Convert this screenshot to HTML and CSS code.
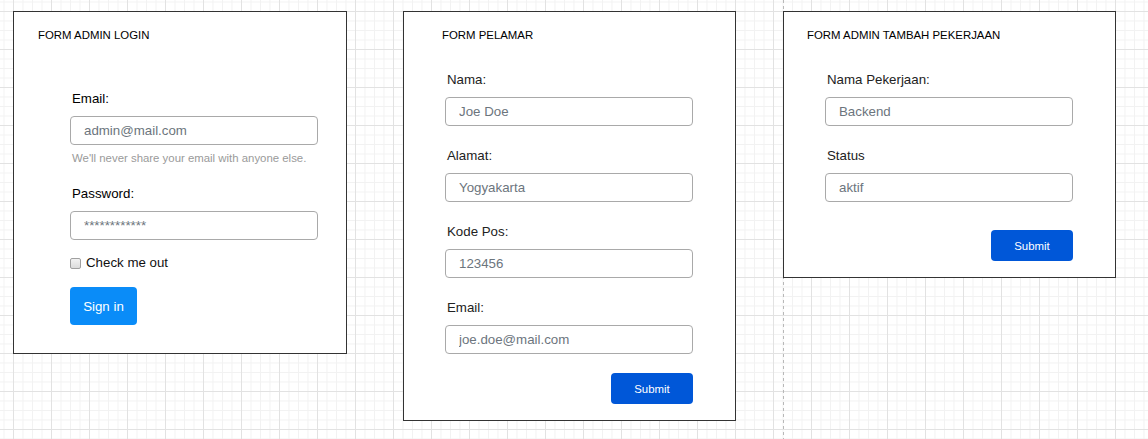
FILE: index.html
```html
<!DOCTYPE html>
<html lang="id">
<head>
<meta charset="utf-8">
<title>Form Mockups</title>
<link rel="stylesheet" href="styles.css">
</head>
<body>
<main class="canvas">
  <section class="card card--login">
    <h2 class="card-title">FORM ADMIN LOGIN</h2>
    <form class="form">
      <div class="field">
        <label class="label">Email:</label>
        <input class="input" type="text" placeholder="admin@mail.com">
        <small class="help">We'll never share your email with anyone else.</small>
      </div>
      <div class="field field--password">
        <label class="label">Password:</label>
        <input class="input" type="text" placeholder="************">
      </div>
      <label class="check">
        <input class="check-box" type="checkbox">
        <span>Check me out</span>
      </label>
      <button class="btn btn--signin" type="button">Sign in</button>
    </form>
  </section>

  <section class="card card--pelamar">
    <h2 class="card-title">FORM PELAMAR</h2>
    <form class="form">
      <div class="field">
        <label class="label">Nama:</label>
        <input class="input" type="text" placeholder="Joe Doe">
      </div>
      <div class="field">
        <label class="label">Alamat:</label>
        <input class="input" type="text" placeholder="Yogyakarta">
      </div>
      <div class="field">
        <label class="label">Kode Pos:</label>
        <input class="input" type="text" placeholder="123456">
      </div>
      <div class="field">
        <label class="label">Email:</label>
        <input class="input" type="text" placeholder="joe.doe@mail.com">
      </div>
      <div class="actions">
        <button class="btn btn--submit" type="button">Submit</button>
      </div>
    </form>
  </section>

  <section class="card card--kerja">
    <h2 class="card-title">FORM ADMIN TAMBAH PEKERJAAN</h2>
    <form class="form">
      <div class="field">
        <label class="label">Nama Pekerjaan:</label>
        <input class="input" type="text" placeholder="Backend">
      </div>
      <div class="field">
        <label class="label">Status</label>
        <input class="input" type="text" placeholder="aktif">
      </div>
      <div class="actions actions--kerja">
        <button class="btn btn--submit" type="button">Submit</button>
      </div>
    </form>
  </section>
</main>
</body>
</html>
```

FILE: styles.css
```css
* {
  box-sizing: border-box;
}

html, body {
  margin: 0;
  padding: 0;
  height: 100%;
}

body {
  font-family: "Liberation Sans", Arial, sans-serif;
  background-color: #ffffff;
  background-image:
    repeating-linear-gradient(to bottom, #b8b8b8 0 3px, transparent 3px 6px),
    linear-gradient(to right, #e2e2e2 1px, transparent 1px),
    linear-gradient(to bottom, #e2e2e2 1px, transparent 1px),
    linear-gradient(to right, #f2f2f2 1px, transparent 1px),
    linear-gradient(to bottom, #f2f2f2 1px, transparent 1px);
  background-size:
    1px 100%,
    38px 38px,
    38px 38px,
    9.5px 9.5px,
    9.5px 9.5px;
  background-position:
    783px 0,
    13px 11px,
    13px 11px,
    13px 11px,
    13px 11px;
  background-repeat:
    no-repeat,
    repeat,
    repeat,
    repeat,
    repeat;
  overflow: hidden;
}

.canvas {
  display: flex;
  align-items: flex-start;
  padding: 11px 0 0 13px;
}

.card {
  background: #ffffff;
  border: 1px solid #333333;
  padding-top: 17px;
  flex: none;
}

.card--login {
  width: 334px;
  height: 343px;
  --title-x: 24px;
  --form-x: 56px;
  --form-top: 49px;
}

.card--pelamar {
  width: 333px;
  height: 410px;
  margin-left: 56px;
  --title-x: 38px;
  --form-x: 41px;
  --form-top: 30px;
}

.card--kerja {
  width: 333px;
  height: 267px;
  margin-left: 47px;
  --title-x: 23px;
  --form-x: 41px;
  --form-top: 30px;
}

.card-title {
  margin: 0;
  padding-left: var(--title-x);
  font-size: 11.4px;
  line-height: 13px;
  font-weight: normal;
  color: #000000;
}

.form {
  margin: var(--form-top) 0 0 var(--form-x);
  width: 248px;
  display: flex;
  flex-direction: column;
}

.field {
  display: flex;
  flex-direction: column;
}

.field + .field {
  margin-top: 22px;
}

.field + .field--password {
  margin-top: 21px;
}

.label {
  display: block;
  padding-left: 2px;
  font-size: 13.3px;
  line-height: 16px;
  color: #222222;
  margin-bottom: 9px;
}

.card--login .label {
  color: #000000;
}

.input {
  display: block;
  width: 248px;
  height: 29px;
  margin: 0;
  padding: 0 13px;
  border: 1px solid #a9a9a9;
  border-radius: 4px;
  background: #ffffff;
  font-family: "Liberation Sans", Arial, sans-serif;
  font-size: 13.3px;
  color: #495057;
  outline: none;
}

.input::placeholder {
  color: #6c757d;
  opacity: 1;
}

.help {
  display: block;
  margin-top: 7px;
  padding-left: 2px;
  font-size: 11.4px;
  line-height: 13px;
  color: #9a9a9a;
}

.check {
  display: flex;
  align-items: center;
  margin-top: 15px;
  height: 16px;
  font-size: 13.3px;
  line-height: 16px;
  color: #111111;
}

.check-box {
  appearance: none;
  -webkit-appearance: none;
  width: 11px;
  height: 11px;
  margin: 1px 5px 0 0;
  border: 1px solid #a0a0a0;
  border-radius: 2px;
  background: linear-gradient(#f2f2f2, #dcdcdc);
}

.btn {
  border: none;
  font-family: "Liberation Sans", Arial, sans-serif;
  color: #ffffff;
  cursor: pointer;
  padding: 0;
}

.btn--signin {
  align-self: flex-start;
  margin-top: 16px;
  width: 67px;
  height: 38px;
  border-radius: 4px;
  background: #0a8cf8;
  font-size: 13.3px;
}

.actions {
  display: flex;
  justify-content: flex-end;
  margin-top: 19px;
}

.actions--kerja {
  margin-top: 28px;
}

.btn--submit {
  width: 82px;
  height: 31px;
  border-radius: 4px;
  background: #0057d8;
  font-size: 11.4px;
}
```
